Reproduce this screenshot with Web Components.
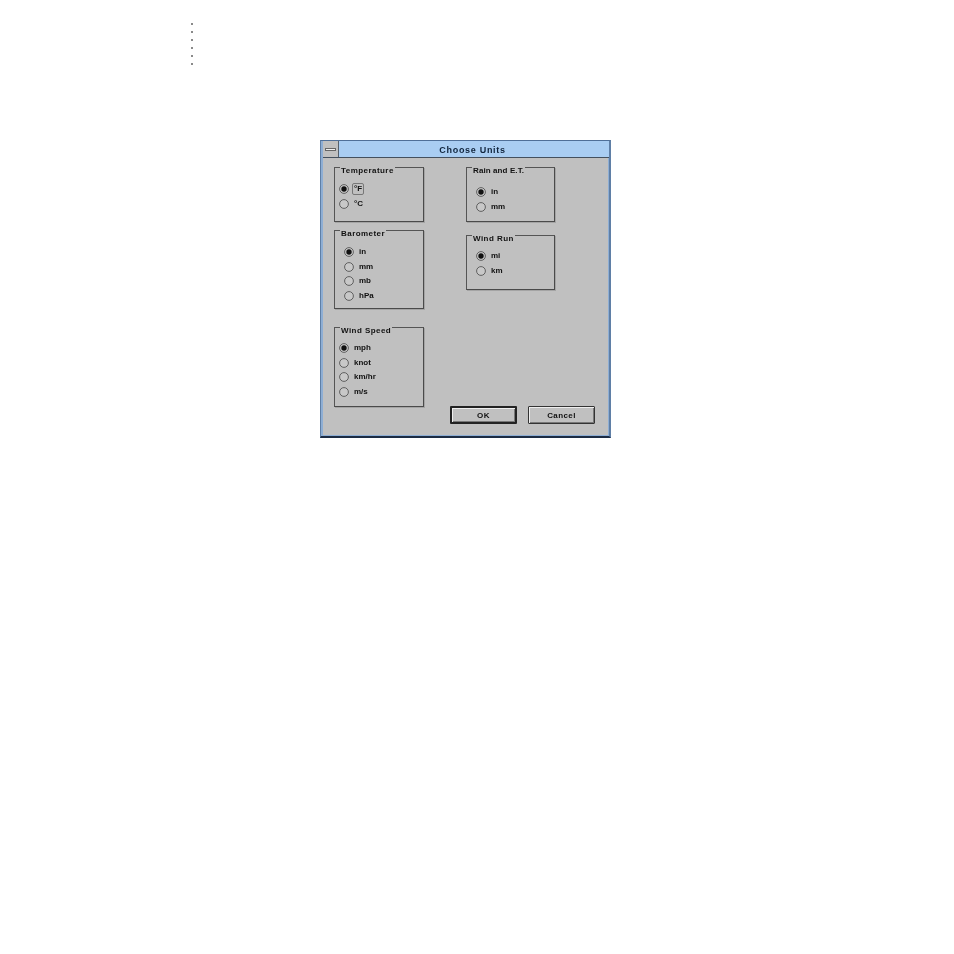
<!DOCTYPE html>
<html>
<head>
<meta charset="utf-8">
<title>Choose Units</title>
<style>
    html, body { margin: 0; background: #fff; }
    body { font-family: "Liberation Sans", Arial, sans-serif; }
</style>
</head>
<body>
<page-dots></page-dots>
<units-dialog title-text="Choose Units">
    <unit-group slot="left" label="Temperature" style="--indent:4px; --top:7px; height:55px">
        <unit-radio checked focused>°F</unit-radio>
        <unit-radio>°C</unit-radio>
    </unit-group>
    <unit-group slot="left" label="Barometer" style="--indent:9px; --top:7px; height:79px; margin-top:8px">
        <unit-radio checked>in</unit-radio>
        <unit-radio>mm</unit-radio>
        <unit-radio>mb</unit-radio>
        <unit-radio>hPa</unit-radio>
    </unit-group>
    <unit-group slot="left" label="Wind Speed" style="--indent:4px; --top:6px; height:80px; margin-top:18px">
        <unit-radio checked>mph</unit-radio>
        <unit-radio>knot</unit-radio>
        <unit-radio>km/hr</unit-radio>
        <unit-radio>m/s</unit-radio>
    </unit-group>
    <unit-group slot="right" label="Rain and E.T." style="--indent:9px; --top:10px; height:55px; --label-spacing:.1px">
        <unit-radio checked>in</unit-radio>
        <unit-radio>mm</unit-radio>
    </unit-group>
    <unit-group slot="right" label="Wind Run" style="--indent:9px; --top:6px; height:55px; margin-top:13px">
        <unit-radio checked>mi</unit-radio>
        <unit-radio>km</unit-radio>
    </unit-group>
    <dialog-button slot="buttons" default>OK</dialog-button>
    <dialog-button slot="buttons">Cancel</dialog-button>
</units-dialog>

<script>
class PageDots extends HTMLElement {
    constructor() {
        super();
        this.attachShadow({ mode: 'open' });
        this.shadowRoot.innerHTML = `
<style>
    :host {
        display: flex;
        flex-direction: column;
        gap: 6px;
        padding: 23px 0 0 191px;
        height: 117px;
        box-sizing: border-box;
    }
    i { display: block; width: 2px; height: 2px; background: #8a8a8a; }
</style>
<i></i><i></i><i></i><i></i><i></i><i></i>`;
    }
}

class UnitsDialog extends HTMLElement {
    constructor() {
        super();
        this.attachShadow({ mode: 'open' });
        this.shadowRoot.innerHTML = `
<style>
    :host {
        display: block;
        box-sizing: border-box;
        width: 291px;
        height: 298px;
        margin: 23px 0 0 320px;
        background: #c0c0c0;
        border: 1px solid #5f7fa6;
        border-width: 1px 2px 2px 1px;
        border-bottom-color: #1c2c44;
        border-right-color: #5f7fa6;
        border-top-color: #4f6f98;
        box-shadow: inset 2px 0 0 #8eaed4, inset -1px -1px 0 #8eaed4;
        filter: blur(0.7px);
        font: bold 8px "Liberation Sans", Arial, sans-serif;
        color: #111;
    }
    .title {
        display: flex;
        height: 16px;
        margin-left: 2px;
        background: #a9cdf2;
        border-bottom: 1px solid #44505e;
    }
    .menu {
        flex: none;
        display: flex;
        align-items: center;
        justify-content: center;
        width: 15px;
        background: #c0c0c0;
        border-right: 1px solid #55606c;
    }
    .menu i { display: block; width: 11px; height: 3px; background: #f0f0f0; border: 1px solid #666; box-sizing: border-box; }
    .name { flex: 1; text-align: center; line-height: 19px; font-size: 9px; color: #10243c; letter-spacing: .7px; padding-right: 3px; }
    .body { display: flex; padding: 9px 0 0 13px; }
    .left { width: 90px; }
    .right { width: 89px; margin-left: 42px; }
    .col { display: flex; flex-direction: column; }
    .buttons {
        display: flex;
        gap: 11px;
        margin: -1px 0 0 129px;
        letter-spacing: .4px;
    }
</style>
<div class="title">
    <div class="menu"><i></i></div>
    <div class="name"></div>
</div>
<div class="body">
    <div class="col left"><slot name="left"></slot></div>
    <div class="col right"><slot name="right"></slot></div>
</div>
<div class="buttons"><slot name="buttons"></slot></div>`;
    }

    connectedCallback() {
        this.shadowRoot.querySelector('.name').textContent = this.getAttribute('title-text');
    }
}

class UnitGroup extends HTMLElement {
    constructor() {
        super();
        this.attachShadow({ mode: 'open' });
        this.shadowRoot.innerHTML = `
<style>
    :host {
        display: block;
        box-sizing: border-box;
        border: 1px solid #555;
        border-right-color: #4a4a4a;
        border-bottom-color: #4a4a4a;
        box-shadow: 1px 1px 0 #a4a4a4;
    }
    .label {
        display: table;
        margin: -2px 0 0 5px;
        padding: 0 1px;
        height: 9px;
        line-height: 9px;
        background: #c0c0c0;
        letter-spacing: var(--label-spacing, .45px);
    }
    .rows {
        display: flex;
        flex-direction: column;
        padding: var(--top, 14px) 0 0 var(--indent, 5px);
    }
</style>
<div class="label"></div>
<div class="rows"><slot></slot></div>`;
    }

    connectedCallback() {
        this.shadowRoot.querySelector('.label').textContent = this.getAttribute('label');
    }
}

class UnitRadio extends HTMLElement {
    constructor() {
        super();
        this.attachShadow({ mode: 'open' });
        this.shadowRoot.innerHTML = `
<style>
    :host {
        display: flex;
        align-items: center;
        height: 14.5px;
    }
    svg { flex: none; width: 10px; height: 10px; margin-right: 5px; }
    .text { padding: 0 1px; line-height: 10px; border: 1px solid transparent; border-radius: 2px; margin-left: -2px; }
    :host([focused]) .text { border-color: #777; }
</style>
<svg viewBox="0 0 10 10">
    <circle cx="5" cy="5" r="4.4" fill="#c8c8c8" stroke="#555" stroke-width="0.9"/>
    <circle class="dot" cx="5" cy="5" r="2.7" fill="#111"/>
</svg>
<span class="text"><slot></slot></span>`;
    }

    connectedCallback() {
        this.shadowRoot.querySelector('.dot').style.display = this.hasAttribute('checked') ? '' : 'none';
    }
}

class DialogButton extends HTMLElement {
    constructor() {
        super();
        this.attachShadow({ mode: 'open' });
        this.shadowRoot.innerHTML = `
<style>
    :host {
        display: flex;
        align-items: center;
        justify-content: center;
        box-sizing: border-box;
        width: 67px;
        height: 18px;
        background: #c0c0c0;
        border: 1px solid #333;
        border-radius: 1px;
        box-shadow: inset 1px 1px 0 #eee, inset -1px -1px 0 #777;
    }
    :host([default]) {
        border: 2px solid #222;
    }
</style>
<slot></slot>`;
    }
}

customElements.define('page-dots', PageDots);
customElements.define('units-dialog', UnitsDialog);
customElements.define('unit-group', UnitGroup);
customElements.define('unit-radio', UnitRadio);
customElements.define('dialog-button', DialogButton);
</script>
</body>
</html>
